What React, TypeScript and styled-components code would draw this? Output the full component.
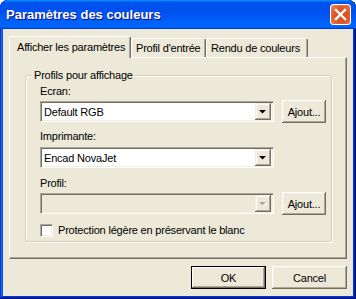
import styled, { createGlobalStyle } from "styled-components";

const GlobalStyle = createGlobalStyle`
  html, body {
    margin: 0;
    padding: 0;
    background: #ffffff;
  }
  * {
    box-sizing: border-box;
  }
`;

const TABS = [
  { id: 1, title: "Afficher les paramètres", active: true, width: 122 },
  { id: 2, title: "Profil d'entrée", active: false, width: 75 },
  { id: 3, title: "Rendu de couleurs", active: false, width: 102 },
];

function Arrow({ disabled }: { disabled?: boolean }) {
  return (
    <svg width="8" height="5" viewBox="0 0 8 5">
      {disabled && <polygon points="1,1 8,1 4.5,4.5" fill="#ffffff" />}
      <polygon points="0,0 7,0 3.5,3.5" fill={disabled ? "#aca899" : "#000000"} />
    </svg>
  );
}

function Combo({ value, disabled }: { value?: string; disabled?: boolean }) {
  return (
    <ComboBox $disabled={disabled}>
      <ComboText>{value}</ComboText>
      <DropButton>
        <Arrow disabled={disabled} />
      </DropButton>
    </ComboBox>
  );
}

export default function App() {
  return (
    <>
      <GlobalStyle />
      <Window>
        <TitleBar>
          <Title>Paramètres des couleurs</Title>
          <CloseButton aria-label="Fermer">
            <svg width="19" height="19" viewBox="0 0 19 19">
              <path
                d="M5 5 L14 14 M14 5 L5 14"
                stroke="#ffffff"
                strokeWidth="2.4"
                strokeLinecap="square"
              />
            </svg>
          </CloseButton>
        </TitleBar>
        <Body>
          <TabRow>
            {TABS.map((tab) => (
              <Tab key={tab.id} $active={tab.active} $width={tab.width}>
                {tab.title}
              </Tab>
            ))}
          </TabRow>
          <Panel>
            <Group>
              <Legend>Profils pour affichage</Legend>
              <FieldLabel $top={9}>Ecran:</FieldLabel>
              <FieldRow $top={2}>
                <Combo value="Default RGB" />
                <PushButton $small>Ajout...</PushButton>
              </FieldRow>
              <FieldLabel $top={7}>Imprimante:</FieldLabel>
              <FieldRow $top={4}>
                <Combo value="Encad NovaJet" />
              </FieldRow>
              <FieldLabel $top={9}>Profil:</FieldLabel>
              <FieldRow $top={2}>
                <Combo disabled />
                <PushButton $small>Ajout...</PushButton>
              </FieldRow>
              <CheckRow>
                <CheckBox />
                <span>Protection légère en préservant le blanc</span>
              </CheckRow>
            </Group>
          </Panel>
          <Footer>
            <PushButton $default>OK</PushButton>
            <PushButton>Cancel</PushButton>
          </Footer>
        </Body>
      </Window>
    </>
  );
}

const Window = styled.div`
  width: 356px;
  height: 299px;
  display: flex;
  flex-direction: column;
  border-radius: 8px 8px 0 0;
  background: #0855dd;
  box-shadow: inset -1px -1px #00138c, inset 1px 1px #0831d9,
    inset -2px -2px #001ea0, inset 2px 2px #166aee, inset -3px -3px #003bda,
    inset 3px 3px #0855dd;
  overflow: hidden;
  font-family: "Liberation Sans", Arial, sans-serif;
  font-size: 11px;
  letter-spacing: -0.2px;
  color: #000000;
`;

const TitleBar = styled.div`
  height: 29px;
  flex-shrink: 0;
  display: flex;
  align-items: center;
  justify-content: space-between;
  padding: 0 5px 0 6px;
  border-radius: 8px 8px 0 0;
  background: linear-gradient(
    180deg,
    #0997ff,
    #0053ee 8%,
    #0050ee 40%,
    #0066ff 88%,
    #0066ff 93%,
    #005bff 95%,
    #003dd7 96%,
    #003dd7
  );
`;

const Title = styled.span`
  font-family: "Liberation Sans", Arial, sans-serif;
  font-weight: bold;
  font-size: 13px;
  color: #ffffff;
  text-shadow: 1px 1px #0f1089;
  letter-spacing: 0;
`;

const CloseButton = styled.div`
  width: 21px;
  height: 21px;
  border: 1px solid #ffffff;
  border-radius: 3px;
  display: flex;
  align-items: center;
  justify-content: center;
  background: radial-gradient(
    circle at 55% 55%,
    #d8481c 0%,
    #e05a2a 55%,
    #e8764a 78%,
    #f4b094 100%
  );
`;

const Body = styled.div`
  flex: 1;
  margin: 0 3px 3px 3px;
  background: #ece9d8;
  padding: 7px 6px 0 6px;
  display: flex;
  flex-direction: column;
`;

const TabRow = styled.div`
  display: flex;
  align-items: flex-end;
  height: 22px;
  margin-bottom: -1px;
  position: relative;
  z-index: 1;
`;

const Tab = styled.div<{ $active?: boolean; $width: number }>`
  width: ${(p) => p.$width}px;
  display: flex;
  align-items: center;
  height: ${(p) => (p.$active ? "22px" : "19px")};
  margin-bottom: ${(p) => (p.$active ? "0" : "1px")};
  padding: 0 0 0 ${(p) => (p.$active ? "7px" : "4px")};
  padding-bottom: ${(p) => (p.$active ? "2px" : "0")};
  background: #ece9d8;
  border-top: 1px solid #ffffff;
  border-left: 1px solid #ffffff;
  border-right: 1px solid #716f64;
  border-radius: 2px 2px 0 0;
  box-shadow: inset -1px 0 #aca899;
  white-space: nowrap;
`;

const Panel = styled.div`
  height: 202px;
  padding: 17px 14px 16px 15px;
  border-top: 1px solid #ffffff;
  border-left: 1px solid #ffffff;
  border-right: 1px solid #716f64;
  border-bottom: 1px solid #716f64;
  box-shadow: inset -1px -1px #aca899;
  display: flex;
  flex-direction: column;
`;

const Group = styled.div`
  position: relative;
  flex: 1;
  border: 1px solid #d0d0bf;
  border-radius: 3px;
  padding: 0 0 0 14px;
  display: flex;
  flex-direction: column;
  box-shadow: 1px 1px #ffffff, inset 1px 1px #ffffff;
`;

const Legend = styled.span`
  position: absolute;
  top: -7px;
  left: 6px;
  padding: 0 2px;
  background: #ece9d8;
  line-height: 13px;
`;

const FieldLabel = styled.div<{ $top: number }>`
  margin-top: ${(p) => p.$top}px;
  line-height: 13px;
  height: 13px;
`;

const FieldRow = styled.div<{ $top: number }>`
  margin-top: ${(p) => p.$top}px;
  display: flex;
  align-items: center;
  gap: 8px;
`;

const ComboBox = styled.div<{ $disabled?: boolean }>`
  width: 234px;
  height: 21px;
  display: flex;
  align-items: center;
  padding: 2px;
  background: ${(p) => (p.$disabled ? "#ece9d8" : "#ffffff")};
  border: 1px solid;
  border-color: #aca899 #ffffff #ffffff #aca899;
  box-shadow: inset 1px 1px #716f64, inset -1px -1px #f1efe2;
`;

const ComboText = styled.span`
  flex: 1;
  padding-left: 1px;
  white-space: nowrap;
`;

const DropButton = styled.div`
  width: 16px;
  height: 17px;
  display: flex;
  align-items: center;
  justify-content: center;
  padding-top: 1px;
  background: #ece9d8;
  box-shadow: inset -1px -1px #716f64, inset 1px 1px #f1efe2,
    inset -2px -2px #aca899, inset 2px 2px #ffffff;
`;

const PushButton = styled.div<{ $small?: boolean; $default?: boolean }>`
  width: ${(p) => (p.$small ? "44px" : "75px")};
  height: 23px;
  display: flex;
  align-items: center;
  justify-content: center;
  background: #ece9d8;
  border: ${(p) => (p.$default ? "1px solid #000000" : "none")};
  box-shadow: ${(p) =>
    p.$default
      ? "inset -1px -1px #716f64, inset 1px 1px #ffffff, inset -2px -2px #aca899"
      : "inset -1px -1px #716f64, inset 1px 1px #ffffff, inset -2px -2px #aca899, inset 2px 2px #f1efe2"};
`;

const CheckRow = styled.div`
  margin-top: 8px;
  display: flex;
  align-items: center;
  gap: 5px;
  height: 14px;
`;

const CheckBox = styled.div`
  width: 13px;
  height: 13px;
  background: #ffffff;
  border: 1px solid;
  border-color: #aca899 #ffffff #ffffff #aca899;
  box-shadow: inset 1px 1px #716f64, inset -1px -1px #f1efe2;
`;

const Footer = styled.div`
  margin-top: 7px;
  display: flex;
  justify-content: flex-end;
  gap: 6px;
`;
